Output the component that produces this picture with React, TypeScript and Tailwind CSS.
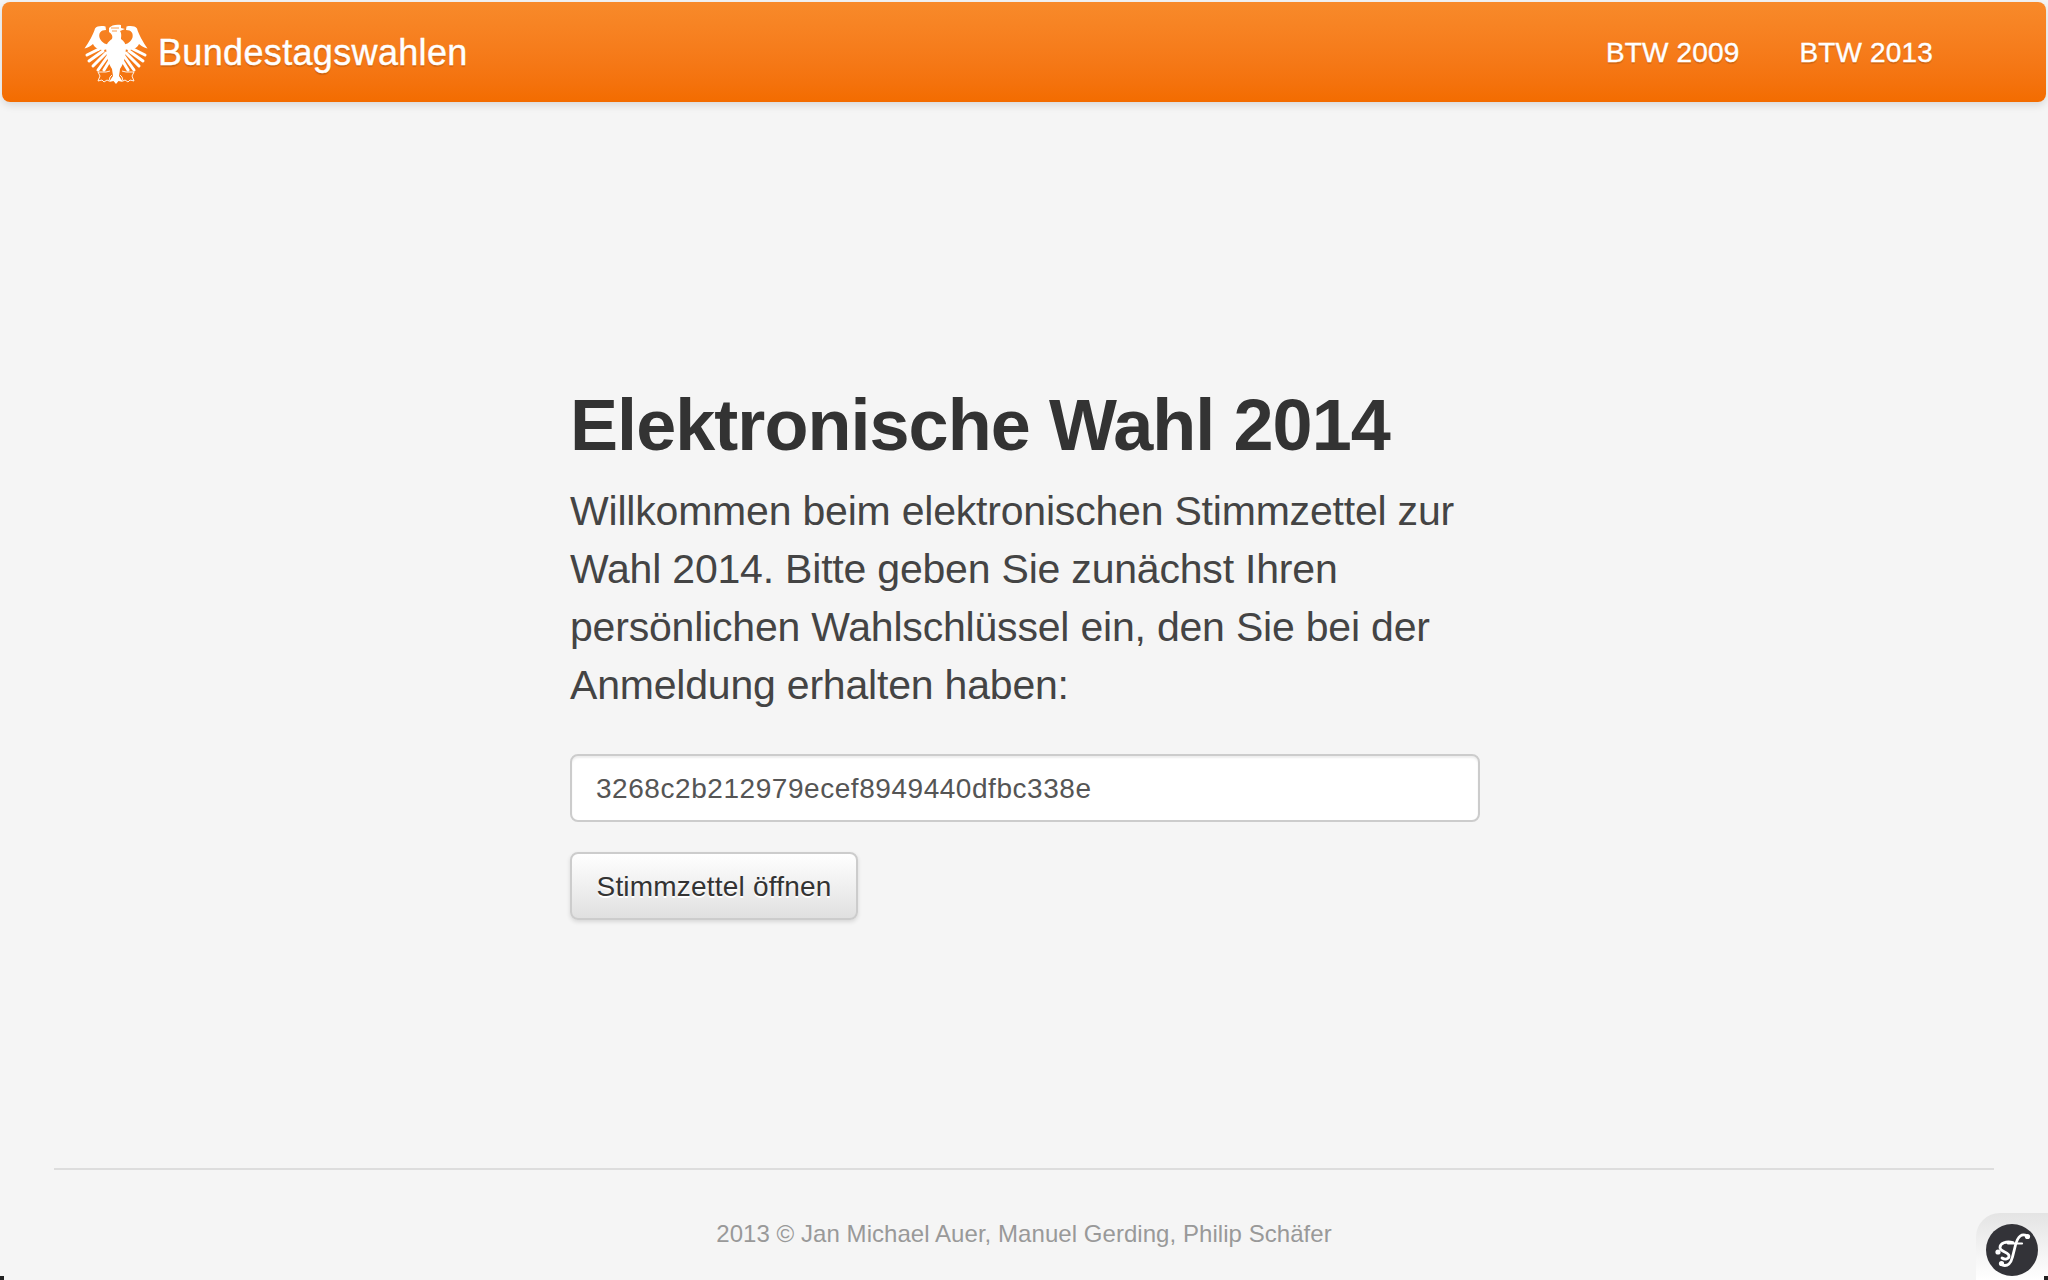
const Eagle = () => {
  const wing = (
    <g>
      <path d="M21.5 2.5 C17 1.5 13 2 11 4.5 C9.5 10 5 18 0.5 24.5 C4 23.5 6.5 22 9 20 C11 24 15 26 20 26 L27 24 L27 20.5 C21 21 17 18 15.5 13.5 C14.5 9.5 16.5 6 22 6 Z" fill="white" />
      <g stroke="white" strokeWidth="3" strokeLinecap="round" fill="none">
        <path d="M15 25 L3 31" />
        <path d="M19 27 L5 37" />
        <path d="M22 29 L9 42" />
        <path d="M24 32 L14 46" />
        <path d="M26 36 L20 46" />
      </g>
      <g stroke="white" strokeWidth="0.9" fill="none">
        <path d="M26 47 L22 48 L14 48 L16 52 L14 57 L18 56 L20 58 L23 56 L25 57 L26 53 L28 51" />
      </g>
    </g>
  );
  return (
    <svg viewBox="0 0 64 60" className="mt-[4px] h-[60px] w-[64px] shrink-0">
      {wing}
      <g transform="translate(64 0) scale(-1 1)">{wing}</g>
      <path d="M25 4 C27 1 33 0 37 1 L37 4 L41 5 L36 7 C38 10 37 13 37 15 C40 17 42 20 42 24 L41 33 C40 38 38 42 36 45 L35 52 L39 58 L34.5 57 L32 60 L29.5 57 L25 58 L29 52 L28 45 C26 42 24 38 23 33 L22 24 C22 20 25 17 28 15 C29 12 28 10 25 8 Z" fill="white" />
      <path d="M27 4 L35 4 M28 7 L33 7" stroke="#f8841f" strokeWidth="0.8" />
    </svg>
  );
};

const Symfony = () => (
  <svg viewBox="0 0 52 52" className="h-[52px] w-[52px]">
    <circle cx="26" cy="26" r="26" fill="#333338" />
    <path d="M41 12 C36 9 32 12 29.5 21 L26.5 33 C25 39 22 43 16 41" stroke="white" strokeWidth="2.8" fill="none" strokeLinecap="round" />
    <path d="M22 19.5 L36 19.5" stroke="white" strokeWidth="2.2" strokeLinecap="round" />
    <path d="M27 18.5 C20 17 14 19 14 23.5 C14 28 23 28 23 32 C23 35 19 36 16 34" stroke="white" strokeWidth="2.8" fill="none" strokeLinecap="round" />
    <circle cx="41.5" cy="12.5" r="2.6" fill="white" />
    <circle cx="12" cy="28" r="2.6" fill="white" />
    <circle cx="15.5" cy="39.5" r="2.6" fill="white" />
  </svg>
);

export default function App() {
  return (
    <div className="relative flex h-[1280px] w-[2048px] flex-col overflow-hidden bg-[#f5f5f5] font-['Liberation_Sans',Arial,sans-serif] text-[#333]">
      <div className="h-[2px] shrink-0" />
      <header className="mx-[2px] flex h-[100px] shrink-0 items-center justify-between rounded-[8px] bg-gradient-to-b from-[#f88a2a] to-[#f36c00] pl-[82px] pr-[113px] shadow-[0_3px_8px_rgba(0,0,0,0.12)]">
        <div className="flex items-center gap-[10px]">
          <Eagle />
          <span className="pt-[1px] text-[36px] leading-[40px] tracking-[0.34px] text-white [-webkit-text-stroke:0.4px_white] [text-shadow:0_2px_1px_rgba(0,0,0,0.15)]">Bundestagswahlen</span>
        </div>
        <nav className="flex gap-[60px] pt-[1px] text-[28px] leading-[40px] tracking-[0.15px] text-white [-webkit-text-stroke:0.4px_white] [text-shadow:0_2px_1px_rgba(0,0,0,0.15)]">
          <a>BTW 2009</a>
          <a>BTW 2013</a>
        </nav>
      </header>

      <main className="flex flex-1 flex-col pl-[570px] pt-[279px]">
        <div className="w-[910px]">
          <h1 className="text-[72px] font-bold leading-[88px] tracking-[-0.95px] text-[#333]">Elektronische Wahl 2014</h1>
          <p className="mt-[13px] w-[920px] text-[41px] leading-[58px] tracking-[-0.2px] text-[#444]">
            Willkommen beim elektronischen Stimmzettel zur<br />
            Wahl 2014. Bitte geben Sie zunächst Ihren<br />
            persönlichen Wahlschlüssel ein, den Sie bei der<br />
            Anmeldung erhalten haben:
          </p>
          <div className="mt-[40px] flex h-[68px] items-center rounded-[8px] border-2 border-[#ccc] bg-white px-[24px] pt-[1px] text-[28px] tracking-[0.55px] text-[#555] shadow-[inset_0_2px_2px_rgba(0,0,0,0.07)]">
            3268c2b212979ecef8949440dfbc338e
          </div>
          <button className="mt-[30px] flex h-[68px] w-[288px] items-center justify-center rounded-[8px] border-2 border-[#ccc] bg-gradient-to-b from-white to-[#e0e0e0] pt-[1px] text-[28px] tracking-[0.2px] text-[#333] shadow-[0_2px_4px_rgba(0,0,0,0.12)] [text-shadow:0_2px_0_#fff]">
            Stimmzettel öffnen
          </button>
        </div>
      </main>

      <footer className="mx-[54px] flex h-[112px] shrink-0 items-start justify-center border-t-2 border-[#ddd] pt-[46px] text-[24px] leading-[36px] tracking-[0.05px] text-[#999]">
        2013 © Jan Michael Auer, Manuel Gerding, Philip Schäfer
      </footer>

      <div className="absolute bottom-0 right-0 flex h-[67px] w-[72px] items-start justify-center rounded-tl-[24px] bg-gradient-to-b from-[#e4e4e4] to-white pt-[11px]">
        <Symfony />
      </div>
      <div className="absolute bottom-0 left-0 h-[4px] w-[4px] bg-[#222]" />
      <div className="absolute bottom-0 right-0 h-[4px] w-[4px] bg-[#222]" />
    </div>
  );
}
